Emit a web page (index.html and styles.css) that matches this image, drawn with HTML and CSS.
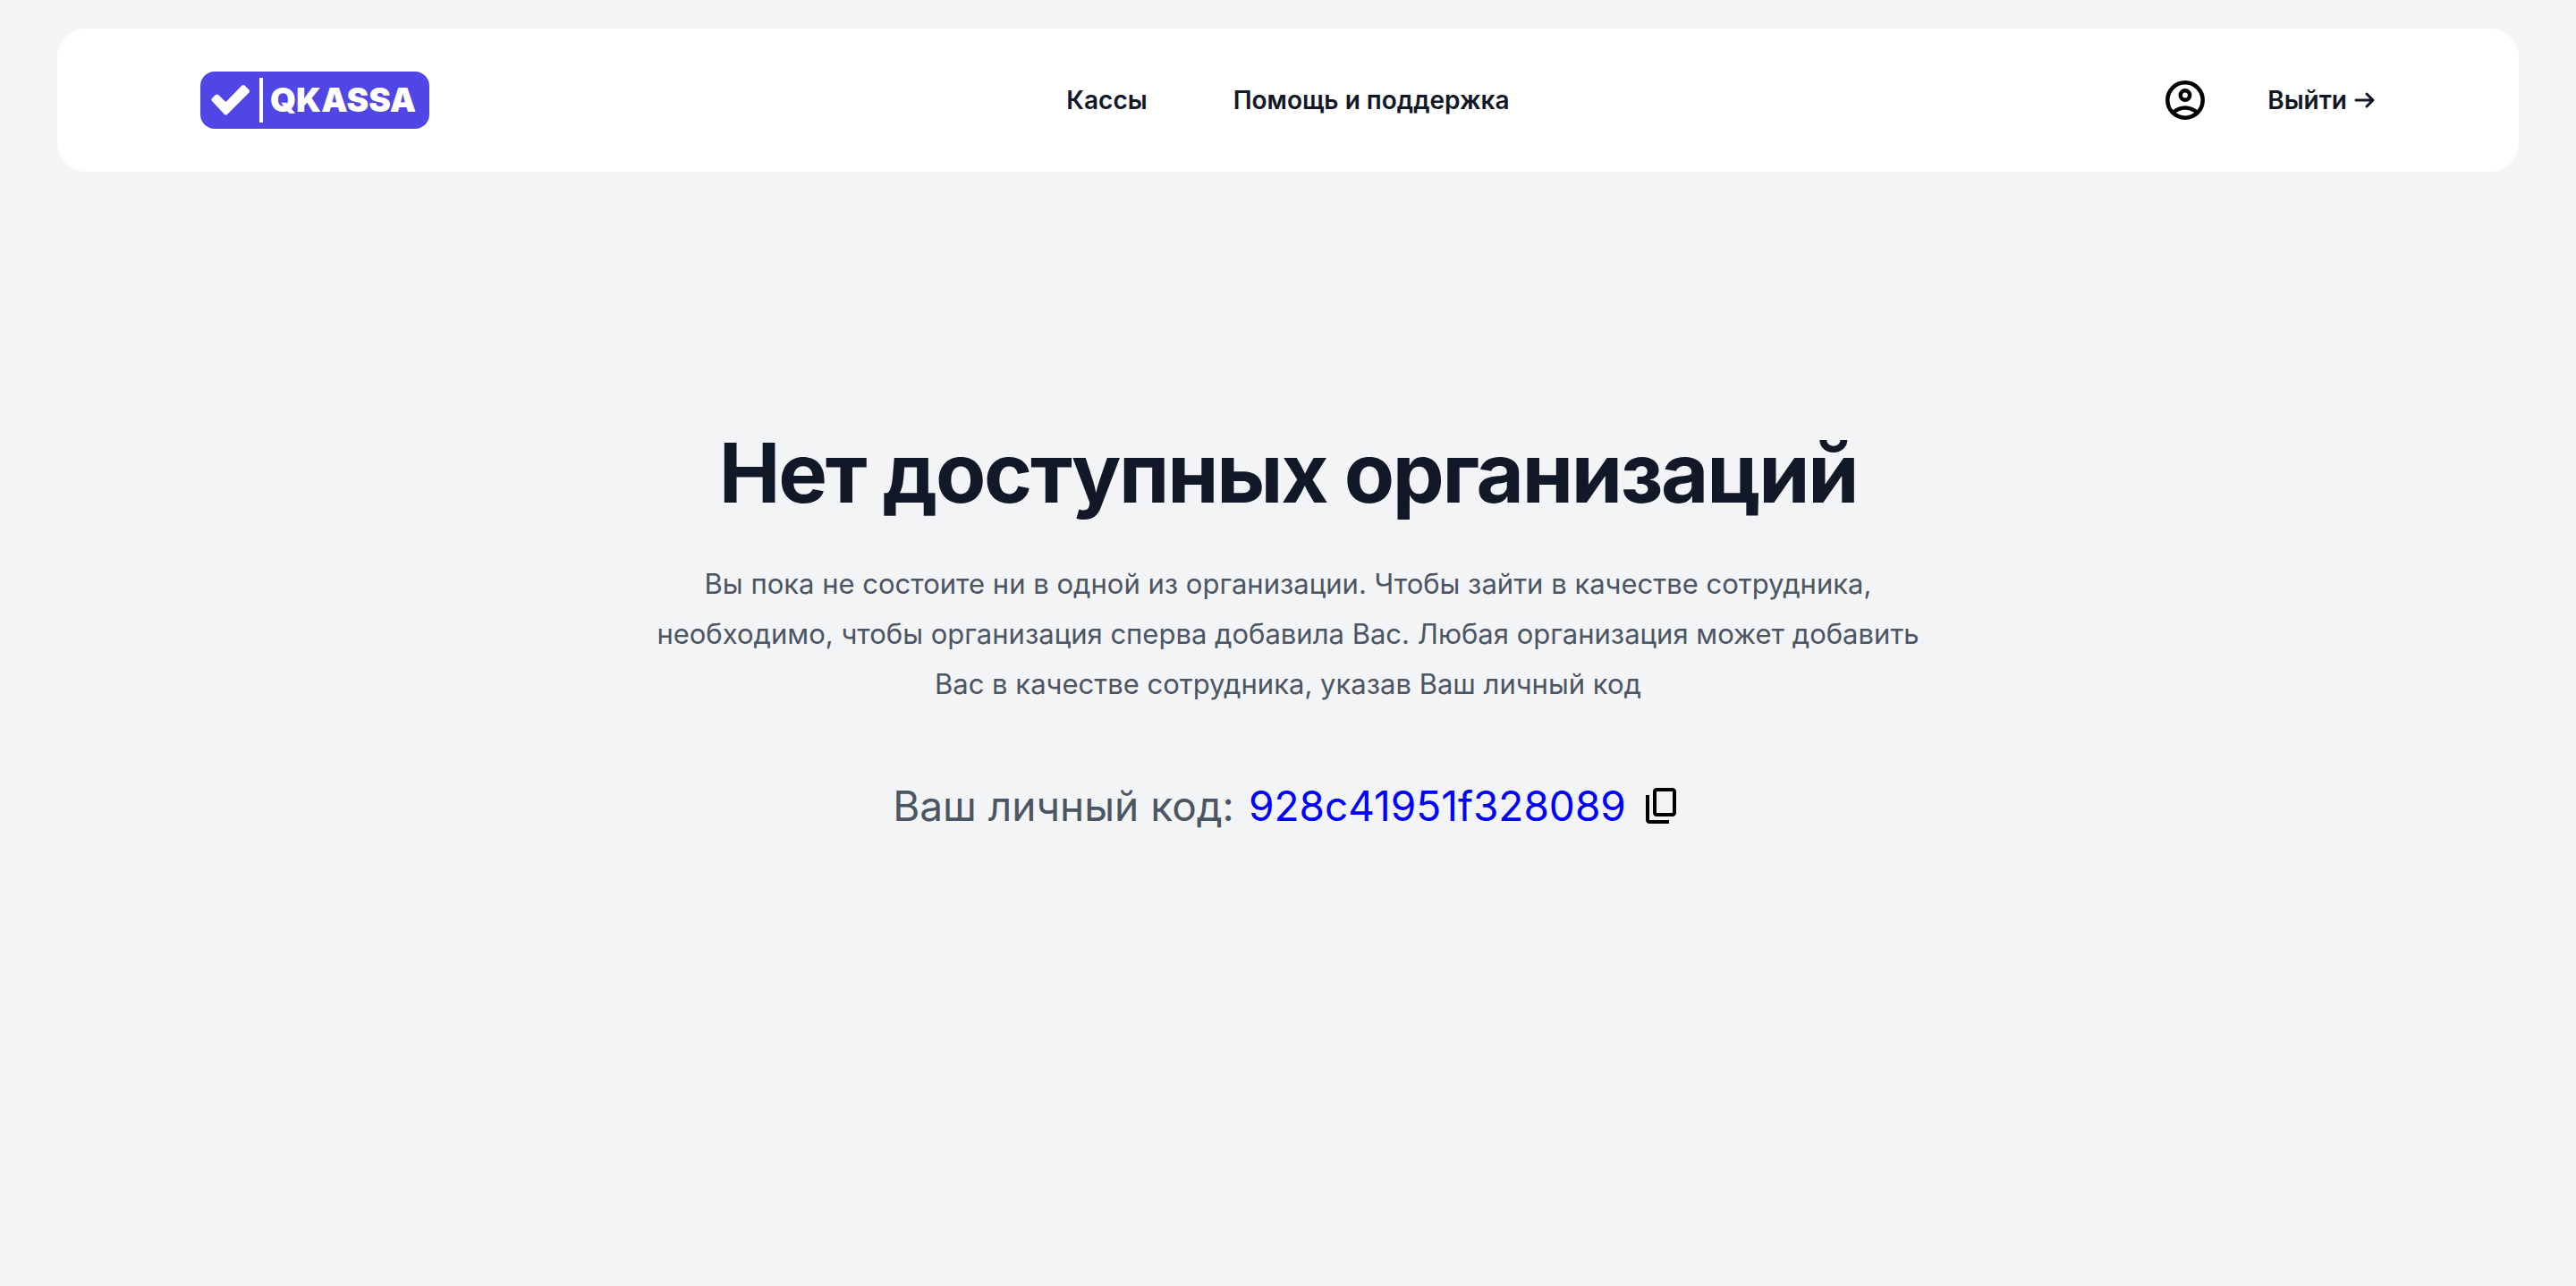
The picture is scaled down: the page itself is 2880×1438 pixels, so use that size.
FILE: index.html
```html
<!DOCTYPE html>
<html lang="ru">

<head>
    <meta charset="UTF-8">
    <title>QKASSA</title>
    <link rel="stylesheet" href="styles.css">
</head>

<body>
    <header class="header">
        <nav class="nav">
            <div class="nav-left">
                <a href="#" class="logo">
                    <svg class="logo-check" viewBox="0 0 44 36" aria-hidden="true">
                        <path d="M1 16l4-4q1.5-1.2 3 0l8.500 8L34.500 1.500q1.500-1.200 3 0l5 5q1.200 1.500 0 3L18 34q-1.500 1.200-3 0L1 19q-1.200-1.500 0-3z" fill="#fff" />
                    </svg>
                    <span class="logo-line"></span>
                    <span class="logo-text">QKASSA</span>
                </a>
            </div>
            <div class="nav-menu">
                <a href="#">Кассы</a>
                <a href="#">Помощь и поддержка</a>
            </div>
            <div class="nav-right">
                <a href="#" class="profile" aria-label="Профиль">
                    <svg class="icon" viewBox="0 0 48 48" fill="none" stroke="#000" stroke-width="4.5" aria-hidden="true">
                        <circle cx="24" cy="24" r="19.700" />
                        <circle cx="24" cy="18.500" r="5.200" />
                        <path d="M10 38q14-11 28 0" />
                    </svg>
                </a>
                <a href="#" class="logout">Выйти
                    <svg class="arrow" viewBox="0 0 24 24" fill="none" stroke="currentColor" stroke-width="3" stroke-linecap="round" stroke-linejoin="round" aria-hidden="true">
                        <path d="M2 12h19M14 5l7 7-7 7" />
                    </svg>
                </a>
            </div>
        </nav>
    </header>

    <main class="content">
        <h1>Нет доступных организаций</h1>
        <p class="description">Вы пока не состоите ни в одной из организации. Чтобы зайти в качестве сотрудника,
            необходимо, чтобы организация сперва добавила Вас. Любая организация может добавить Вас в качестве
            сотрудника, указав Ваш личный код</p>
        <div class="code">
            <span>Ваш личный код:</span>
            <span class="code-value">928c41951f328089</span>
            <button type="button" class="copy" aria-label="Скопировать">
                <svg class="icon" viewBox="0 -960 960 960" aria-hidden="true">
                    <path d="M360-240q-33 0-56.5-23.5T280-320v-480q0-33 23.5-56.5T360-880h360q33 0 56.5 23.5T800-800v480q0 33-23.5 56.5T720-240H360Zm0-80h360v-480H360v480ZM200-80q-33 0-56.5-23.5T120-160v-560h80v560h440v80H200Z" />
                </svg>
            </button>
        </div>
    </main>
</body>

</html>
```
FILE: styles.css
```css
body {
    margin: 0;
    background: #f3f4f6;
    color: #111827;
    font-family: Inter, "Liberation Sans", sans-serif;
}

a {
    color: inherit;
    text-decoration: none;
}

.header {
    padding: 32px 64px;
}

.nav {
    display: flex;
    align-items: center;
    padding: 48px 160px;
    border-radius: 32px;
    background: #fff;
    font-size: 28px;
    font-weight: 600;
    line-height: 48px;
}

.nav-left,
.nav-right {
    display: flex;
    flex: 1;
    align-items: center;
}

.nav-right {
    justify-content: flex-end;
    gap: 68px;
}

.nav-menu {
    display: flex;
    gap: 96px;
}

.logo {
    display: flex;
    align-items: center;
    box-sizing: border-box;
    width: 256px;
    height: 64px;
    padding: 0 12px;
    border-radius: 16px;
    background: #4f46e5;
    color: #fff;
}

.logo-check {
    width: 44px;
    height: 36px;
}

.logo-line {
    width: 4px;
    height: 50px;
    margin: 0 8px 0 10px;
    background: #fff;
}

.logo-text {
    font-size: 37px;
    font-weight: 900;
}

.profile {
    display: flex;
}

.icon {
    display: block;
    width: 48px;
    height: 48px;
}

.logout {
    display: flex;
    align-items: center;
    gap: 8px;
}

.arrow {
    width: 24px;
    height: 24px;
}

.content {
    max-width: 1440px;
    margin: 0 auto;
    padding: 257px 32px;
    text-align: center;
}

h1 {
    margin: 0;
    font-size: 92px;
    font-weight: 700;
    line-height: 96px;
    letter-spacing: -0.025em;
}

.description {
    margin: 48px 0 0;
    color: #4b5563;
    font-size: 31px;
    line-height: 56px;
}

.code {
    display: flex;
    align-items: center;
    justify-content: center;
    gap: 16px;
    margin-top: 80px;
    color: #4b5563;
    font-size: 46px;
    line-height: 56px;
}

.code-value {
    color: #00f;
}

.copy {
    padding: 0;
    border: 0;
    background: none;
    cursor: pointer;
}
```
